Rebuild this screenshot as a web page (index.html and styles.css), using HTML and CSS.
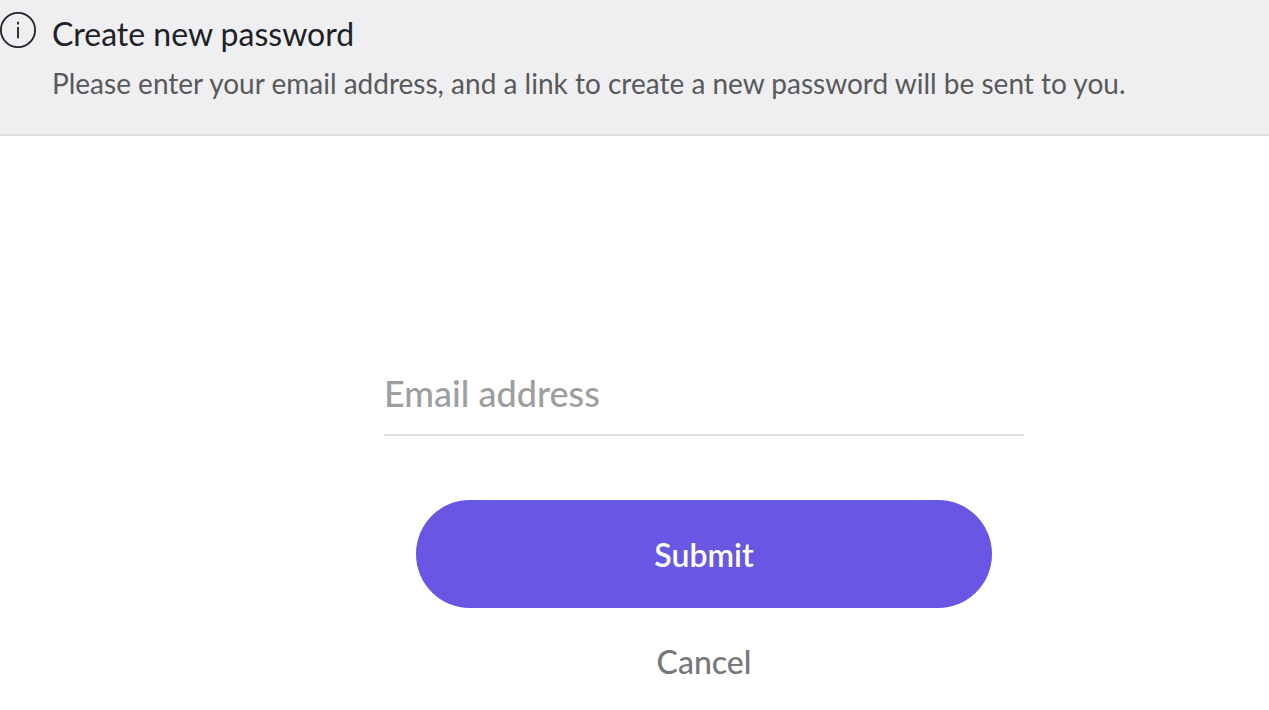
FILE: index.html
```html
<!DOCTYPE html>
<html lang="en">
<head>
    <meta charset="UTF-8" />
    <meta name="viewport" content="width=device-width, initial-scale=1.0"/>
    <title>Create new password</title>
    <link rel="stylesheet" href="styles.css">
</head>
<body>
    <header class="notice">
        <svg class="notice-icon" viewBox="0 0 36 36" aria-hidden="true">
            <circle cx="18" cy="18" r="17.1" />
            <path d="M18 9.8v2.7M18 15v11.3" />
        </svg>
        <div class="notice-text">
            <h1>Create new password</h1>
            <p>Please enter your email address, and a link to create a new password will be sent to you.</p>
        </div>
    </header>

    <main>
        <form class="reset-form">
            <input type="email" class="email-input" placeholder="Email address" aria-label="Email address" />
            <div class="form-actions">
                <button type="submit" class="submit-button">Submit</button>
                <a href="#" class="cancel-link">Cancel</a>
            </div>
        </form>
    </main>
</body>
</html>
```
FILE: styles.css
```css
* {
    box-sizing: border-box;
    margin: 0;
    padding: 0;
}

body {
    background-color: #fff;
    font-family: Lato, sans-serif;
}

/* Notice bar */
.notice {
    display: flex;
    gap: 16px;
    padding: 12px 0 32px;
    background-color: #efeff1;
    border-bottom: 2px solid #e0e0e0;
}

.notice-icon {
    flex: none;
    width: 36px;
    height: 36px;
    fill: none;
    stroke: #202127;
    stroke-width: 1.8;
}

.notice h1 {
    margin-bottom: 8px;
    font-size: 32px;
    line-height: 44px;
    font-weight: 400;
    color: #202127;
}

.notice p {
    font-size: 28px;
    line-height: 38px;
    color: #58595b;
}

/* Form */
.reset-form {
    width: 640px;
    max-width: 100%;
    margin: 216px 0 0 384px;
}

.email-input {
    display: block;
    width: 100%;
    height: 84px;
    border: none;
    border-bottom: 2px solid #e0e0e0;
    background: none;
    font-family: inherit;
    font-size: 36px;
    font-weight: 500;
    color: #202127;
    outline: none;
}

.email-input::placeholder {
    color: #9f9fa0;
    opacity: 1;
}

.form-actions {
    display: flex;
    flex-direction: column;
    align-items: center;
    gap: 32px;
    padding: 64px 32px 0;
}

.submit-button {
    width: 100%;
    height: 108px;
    border: none;
    border-radius: 54px;
    background-color: #6757e2;
    font-family: inherit;
    font-size: 32px;
    font-weight: 600;
    color: #fff;
    cursor: pointer;
}

.cancel-link {
    font-size: 32px;
    line-height: 44px;
    font-weight: 500;
    color: #77787b;
    text-decoration: none;
}
```
